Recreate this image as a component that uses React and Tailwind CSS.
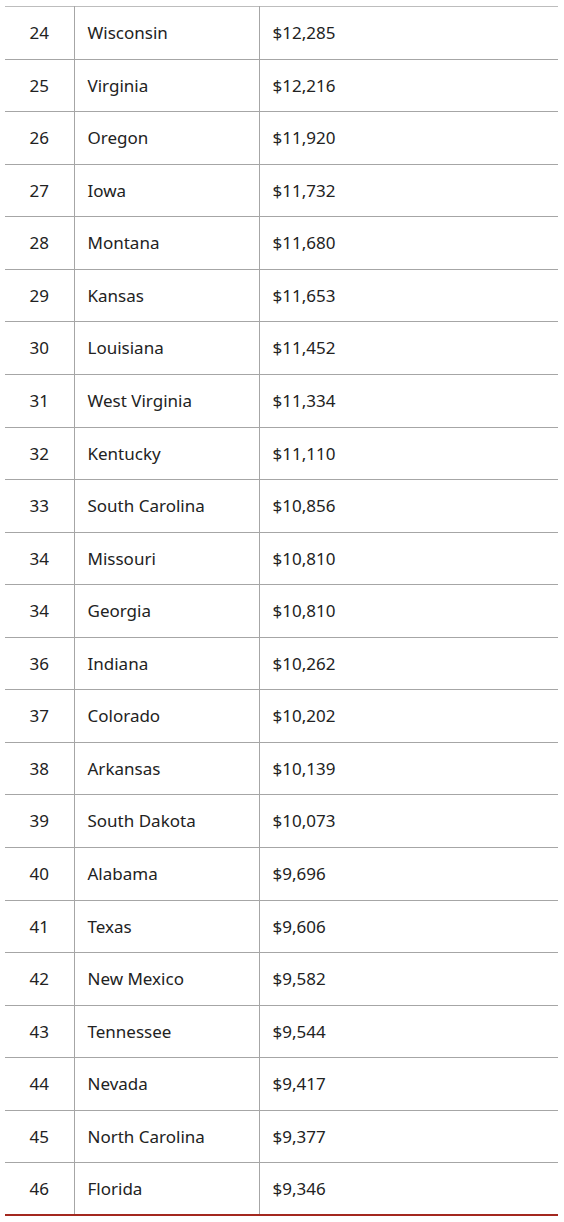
const rows = [
  ['24', 'Wisconsin', '$12,285'],
  ['25', 'Virginia', '$12,216'],
  ['26', 'Oregon', '$11,920'],
  ['27', 'Iowa', '$11,732'],
  ['28', 'Montana', '$11,680'],
  ['29', 'Kansas', '$11,653'],
  ['30', 'Louisiana', '$11,452'],
  ['31', 'West Virginia', '$11,334'],
  ['32', 'Kentucky', '$11,110'],
  ['33', 'South Carolina', '$10,856'],
  ['34', 'Missouri', '$10,810'],
  ['34', 'Georgia', '$10,810'],
  ['36', 'Indiana', '$10,262'],
  ['37', 'Colorado', '$10,202'],
  ['38', 'Arkansas', '$10,139'],
  ['39', 'South Dakota', '$10,073'],
  ['40', 'Alabama', '$9,696'],
  ['41', 'Texas', '$9,606'],
  ['42', 'New Mexico', '$9,582'],
  ['43', 'Tennessee', '$9,544'],
  ['44', 'Nevada', '$9,417'],
  ['45', 'North Carolina', '$9,377'],
  ['46', 'Florida', '$9,346'],
];

export default function App() {
  return (
    <div className="min-h-[1222px] bg-white pl-[5px] pr-[6px] pt-[6px] font-['Noto_Sans',sans-serif] text-[17px] text-[#222]">
      <table className="w-full border-collapse border-b-2 border-b-[#a3281f]">
        <tbody>
          {rows.map(([rank, state, cost], i) => (
            <tr
              key={state}
              className={`h-[52.57px] border-t ${i === 0 ? 'border-t-[#bdbdbd]' : 'border-t-[#a6a6a6]'}`}
            >
              <td className="w-[69px] border-r border-r-[#a6a6a6] text-center">{rank}</td>
              <td className="w-[185px] border-r border-r-[#a6a6a6] pl-[13px]">{state}</td>
              <td className="pl-[13px]">{cost}</td>
            </tr>
          ))}
        </tbody>
      </table>
    </div>
  );
}
